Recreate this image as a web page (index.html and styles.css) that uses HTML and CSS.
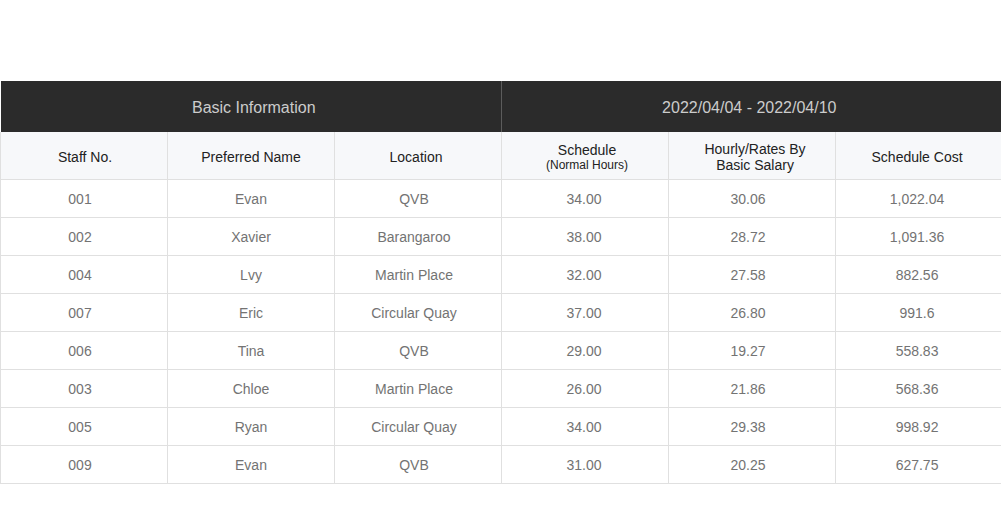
FILE: index.html
```html
<!DOCTYPE html>
<html>
<head>
<meta charset="utf-8">
<link rel="stylesheet" href="styles.css">
</head>
<body>
<div class="page">
<table class="grid">
  <colgroup>
    <col class="c"><col class="c"><col class="c"><col class="c"><col class="c"><col class="c">
  </colgroup>
  <thead>
    <tr class="group">
      <th colspan="3" class="g g-left">Basic Information</th>
      <th colspan="3" class="g g-right">2022/04/04 - 2022/04/10</th>
    </tr>
    <tr class="cols">
      <th>Staff No.</th>
      <th>Preferred Name</th>
      <th>Location</th>
      <th><div class="two"><span>Schedule</span><span class="sub">(Normal Hours)</span></div></th>
      <th><div class="two"><span>Hourly/Rates By</span><span>Basic Salary</span></div></th>
      <th>Schedule Cost</th>
    </tr>
  </thead>
  <tbody>
    <tr><td>001</td><td>Evan</td><td>QVB</td><td>34.00</td><td>30.06</td><td>1,022.04</td></tr>
    <tr><td>002</td><td>Xavier</td><td>Barangaroo</td><td>38.00</td><td>28.72</td><td>1,091.36</td></tr>
    <tr><td>004</td><td>Lvy</td><td>Martin Place</td><td>32.00</td><td>27.58</td><td>882.56</td></tr>
    <tr><td>007</td><td>Eric</td><td>Circular Quay</td><td>37.00</td><td>26.80</td><td>991.6</td></tr>
    <tr><td>006</td><td>Tina</td><td>QVB</td><td>29.00</td><td>19.27</td><td>558.83</td></tr>
    <tr><td>003</td><td>Chloe</td><td>Martin Place</td><td>26.00</td><td>21.86</td><td>568.36</td></tr>
    <tr><td>005</td><td>Ryan</td><td>Circular Quay</td><td>34.00</td><td>29.38</td><td>998.92</td></tr>
    <tr><td>009</td><td>Evan</td><td>QVB</td><td>31.00</td><td>20.25</td><td>627.75</td></tr>
  </tbody>
</table>
</div>
</body>
</html>
```

FILE: styles.css
```css
html, body {
  margin: 0;
  padding: 0;
  background: #ffffff;
  overflow: hidden;
}
.page {
  padding-top: 81px;
  width: 1001px;
  overflow: hidden;
}
.grid {
  border-collapse: collapse;
  table-layout: fixed;
  width: 1003px;
  font-family: "Liberation Sans", Arial, sans-serif;
}
.grid col.c {
  width: 167px;
}
.grid th, .grid td {
  padding: 0;
  text-align: center;
  vertical-align: middle;
  box-sizing: border-box;
}
.group th {
  background: #2b2b2b;
  color: #cccccc;
  font-weight: normal;
  font-size: 16px;
  height: 51px;
  padding-top: 2px;
  border: none;
}
.group .g-left {
  border-right: 1px solid #5c5c5c;
  padding-left: 6px;
}
.group .g-right {
  padding-right: 6px;
}
.cols th {
  background: #f7f8fa;
  color: #222222;
  font-weight: normal;
  font-size: 14px;
  height: 47px;
  padding-top: 3px;
  border: 1px solid #e0e0e0;
  border-top: none;
}
.cols th:nth-child(1) { padding-left: 2px; }
.cols th:nth-child(3) { padding-right: 4px; }
.cols th:nth-child(4) { padding-left: 4px; }
.cols th:nth-child(5) { padding-left: 6px; }
.cols th:nth-child(6) { padding-right: 4px; }
.two {
  display: flex;
  flex-direction: column;
  align-items: center;
  line-height: 16px;
}
.two .sub {
  font-size: 12px;
  line-height: 14px;
}
.grid td {
  color: #737373;
  font-size: 14px;
  height: 38px;
  padding-top: 2px;
  border: 1px solid #e0e0e0;
}
.grid td:nth-child(1),
.grid td:nth-child(3),
.grid td:nth-child(5) { padding-right: 8px; }
.grid td:nth-child(4) { padding-right: 2px; }
.grid td:nth-child(6) { padding-right: 4px; }
```
